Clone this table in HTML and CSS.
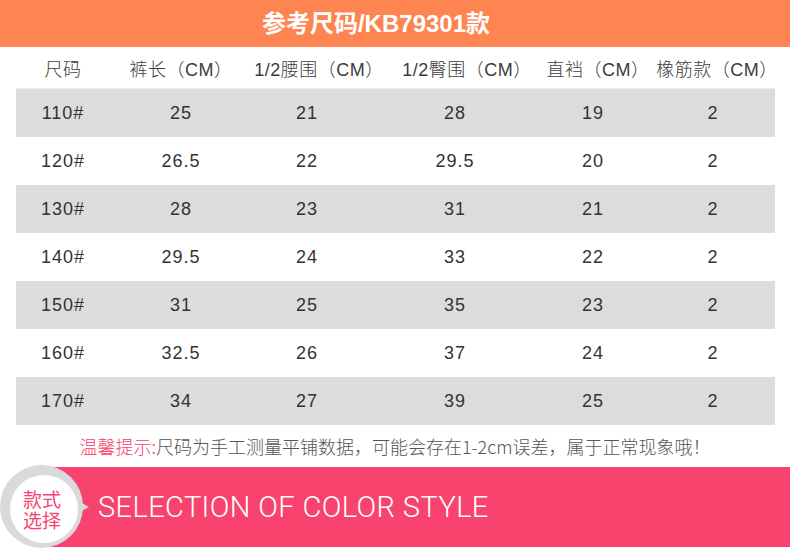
FILE: index.html
```html
<!DOCTYPE html>
<html lang="zh-CN">
<head>
<meta charset="utf-8">
<title>参考尺码</title>
<link rel="stylesheet" href="styles.css">
</head>
<body>
<div class="page">
  <header class="title-bar">参考尺码/KB79301款</header>
  <div class="size-table">
    <div class="row head">
      <div class="c c1">尺码</div>
      <div class="c c2">裤长（CM）</div>
      <div class="c c3">1/2腰围（CM）</div>
      <div class="c c4">1/2臀围（CM）</div>
      <div class="c c5">直裆（CM）</div>
      <div class="c c6">橡筋款（CM）</div>
    </div>
    <div class="row gray"><div class="c c1">110#</div><div class="c c2">25</div><div class="c c3">21</div><div class="c c4">28</div><div class="c c5">19</div><div class="c c6">2</div></div>
    <div class="row"><div class="c c1">120#</div><div class="c c2">26.5</div><div class="c c3">22</div><div class="c c4">29.5</div><div class="c c5">20</div><div class="c c6">2</div></div>
    <div class="row gray"><div class="c c1">130#</div><div class="c c2">28</div><div class="c c3">23</div><div class="c c4">31</div><div class="c c5">21</div><div class="c c6">2</div></div>
    <div class="row"><div class="c c1">140#</div><div class="c c2">29.5</div><div class="c c3">24</div><div class="c c4">33</div><div class="c c5">22</div><div class="c c6">2</div></div>
    <div class="row gray"><div class="c c1">150#</div><div class="c c2">31</div><div class="c c3">25</div><div class="c c4">35</div><div class="c c5">23</div><div class="c c6">2</div></div>
    <div class="row"><div class="c c1">160#</div><div class="c c2">32.5</div><div class="c c3">26</div><div class="c c4">37</div><div class="c c5">24</div><div class="c c6">2</div></div>
    <div class="row gray"><div class="c c1">170#</div><div class="c c2">34</div><div class="c c3">27</div><div class="c c4">39</div><div class="c c5">25</div><div class="c c6">2</div></div>
  </div>
  <p class="note"><span class="hl">温馨提示:</span>尺码为手工测量平铺数据，可能会存在1-2cm误差，属于正常现象哦！</p>
  <div class="banner">
    <div class="badge">
      <span class="badge-tip"></span>
      <div class="badge-inner"><span class="bl">款式</span><span class="bl">选择</span></div>
    </div>
    <div class="banner-text">SELECTION OF COLOR STYLE</div>
  </div>
</div>
</body>
</html>
```
FILE: styles.css
```css
html, body {
  margin: 0;
  padding: 0;
  background: #ffffff;
}
body {
  font-family: "Liberation Sans", "Noto Sans CJK SC", sans-serif;
  width: 790px;
  height: 557px;
  overflow: hidden;
}
.page {
  width: 790px;
}
.title-bar {
  height: 47px;
  background: #fe8451;
  color: #ffffff;
  text-align: center;
  font-family: "Liberation Sans", "Noto Sans CJK SC", sans-serif;
  font-weight: bold;
  font-size: 24px;
  line-height: 47px;
  padding-right: 38px;
}
.size-table {
  margin: 0 15px 0 16px;
  width: 759px;
}
.row {
  display: grid;
  grid-template-columns: 94px 142px 110px 186px 103px 124px;
  height: 48px;
  align-items: center;
  font-size: 18px;
  color: #333333;
  letter-spacing: 1px;
}
.row.head {
  height: 41px;
  border-bottom: 1px solid #eeeeee;
  color: #3c3c3c;
  font-weight: 300;
  font-size: 18px;
  letter-spacing: 0.5px;
}
.row.gray {
  background: #dcdcdc;
}
.c {
  display: flex;
  justify-content: center;
  white-space: nowrap;
}
.c5 {
  padding-right: 13px;
}
.head .c3, .head .c4 {
  padding-left: 24px;
}
.head .c5 {
  padding-right: 3px;
}
.head .c6 {
  padding-left: 8px;
}
.note {
  margin: 0;
  height: 42px;
  line-height: 42px;
  text-align: center;
  font-family: "Noto Sans CJK SC", sans-serif;
  font-weight: 300;
  font-size: 18px;
  color: #555555;
}
.note .hl {
  color: #f73c6b;
}
.banner {
  position: relative;
  margin-left: 50px;
  height: 80px;
  background: #f8436e;
  padding-left: 48px;
  display: flex;
  align-items: center;
}
.banner-text {
  color: #ffffff;
  font-family: Roboto, "Liberation Sans", sans-serif;
  font-weight: 300;
  font-size: 29px;
  letter-spacing: 0.4px;
}
.badge {
  position: absolute;
  left: -50px;
  top: -2px;
  width: 83px;
  height: 83px;
  border-radius: 50%;
  background: #dadada;
}
.badge-tip {
  position: absolute;
  left: 78px;
  top: 36px;
  width: 0;
  height: 0;
  border-top: 6px solid transparent;
  border-bottom: 6px solid transparent;
  border-left: 11px solid #dadada;
}
.badge-inner {
  position: absolute;
  left: 10px;
  top: 10px;
  width: 68px;
  height: 68px;
  border-radius: 50%;
  background: #ffffff;
  display: flex;
  flex-direction: column;
  align-items: center;
  justify-content: center;
  gap: 1px;
  color: #f7446f;
  font-family: "Noto Sans CJK SC", sans-serif;
  font-size: 19px;
  padding-right: 4px;
  box-sizing: border-box;
}
.bl {
  display: block;
  height: 20px;
  line-height: 20px;
  overflow: visible;
}
```
